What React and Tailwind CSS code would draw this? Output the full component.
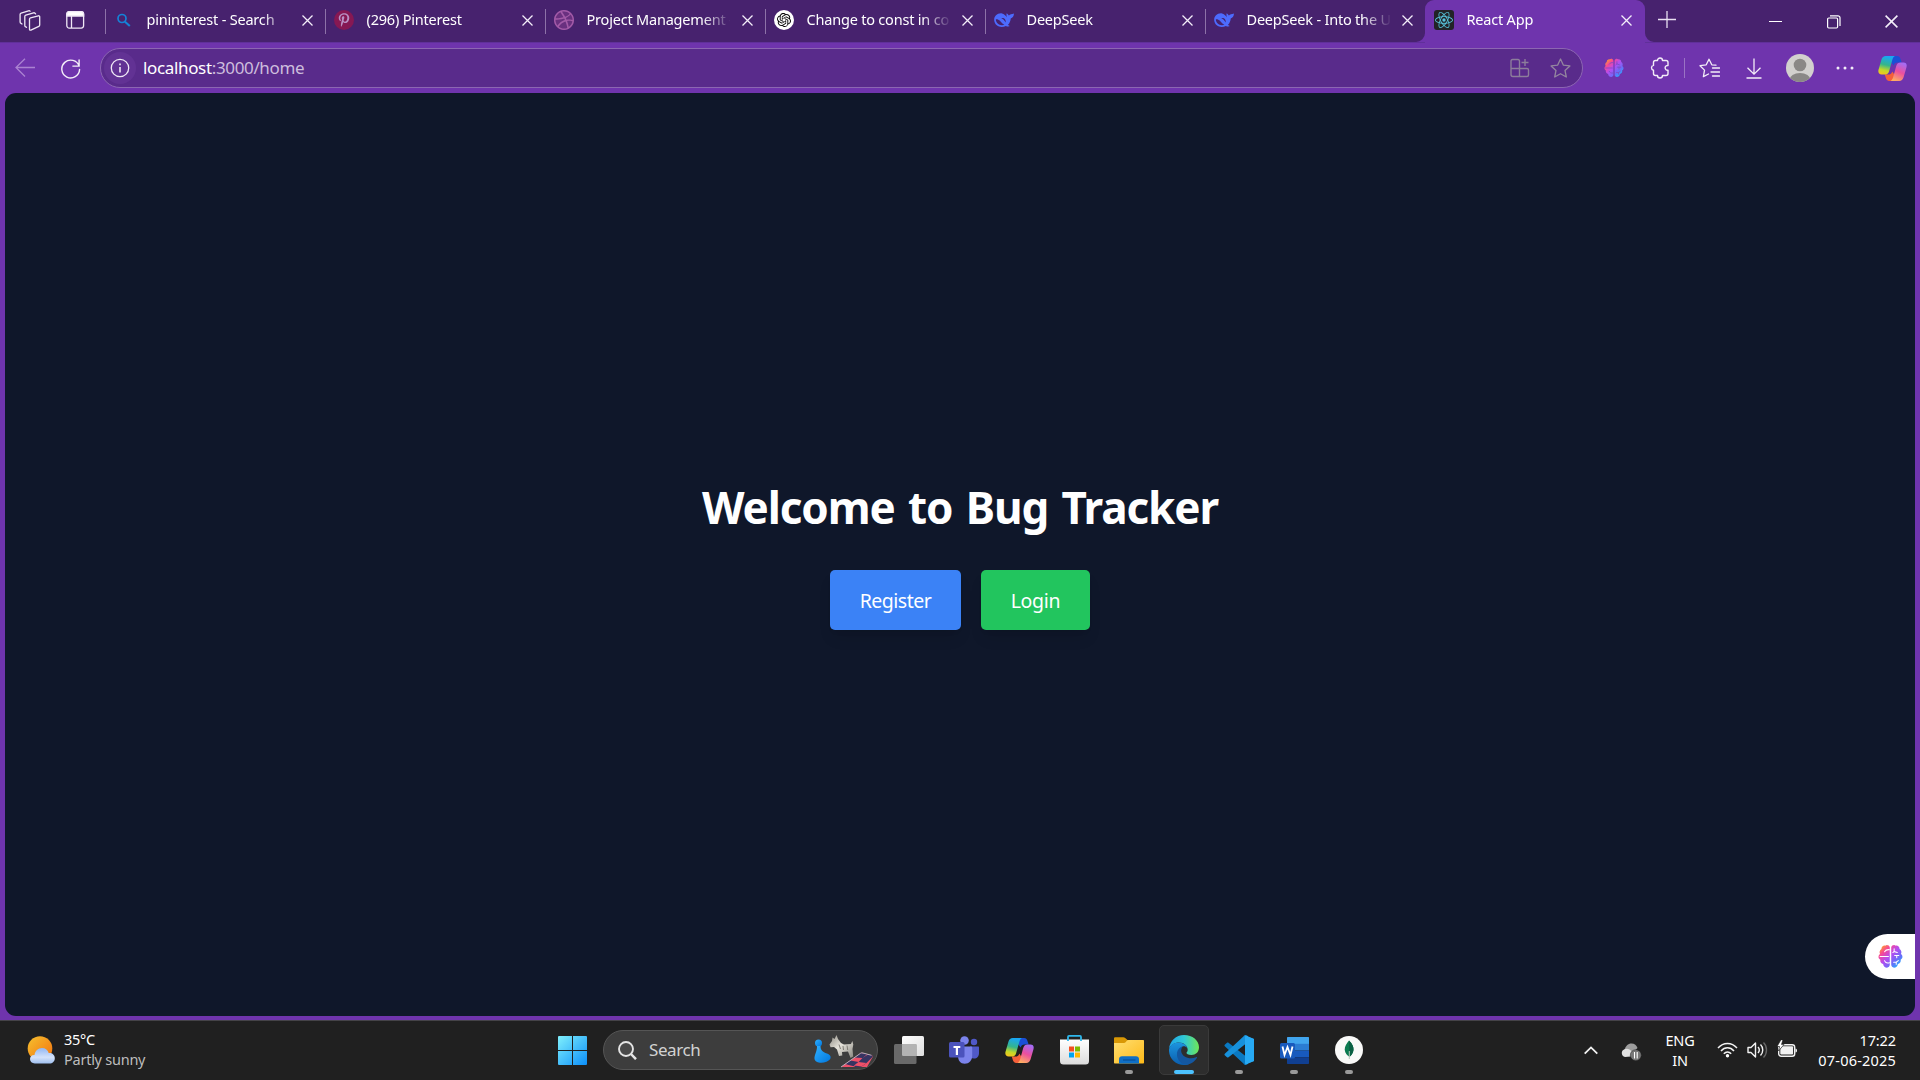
import React from "react";
import { FaPinterestP } from "react-icons/fa";
import { SiOpenai, SiDribbble, SiReact } from "react-icons/si";

const Cross = ({ s = 11 }) => (
  <svg width={s} height={s} viewBox="0 0 11 11" fill="none" stroke="#f4effa" strokeWidth="1.3">
    <path d="M.5.5l10 10M10.5.5l-10 10" />
  </svg>
);

const Whale = () => (
  <svg width="20" height="20" viewBox="0 0 20 20">
    <path
      fill="#4d6bfe"
      d="M8 3.400c2 .5 3.700 2 4.900 3.800-.5-1.300-.6-2.700-.2-4 .9.500 1.500 1.200 2.200 2.200C15.900 4.200 17.800 4.400 20 3.600c-.1 2.700-1.300 4.300-3.300 4.900-.1 2.300-1 4.600-2.700 6.300.4.600 1 .9 1.900 1.300-1.200.7-2.700.6-4-.2C7.500 18.200 1 16.800.2 10.600-.2 6.500 3 2.800 8 3.400z"
    />
    <path d="M1.800 9.600c.3 3.200 2.800 5.600 6.200 5.600.9 0 1.700-.2 2.400-.5C8 13.800 6.600 10.300 3.800 9.400c-.8-.2-1.500-.1-2 .2z" fill="#47226e" />
    <path d="M7.300 8.300c1.500-.6 3.300 0 4.100 1.700.4.900.4 1.700.2 2.400-.9-1.500-2.100-3.200-4.300-4.100z" fill="#47226e" />
    <path d="M6.300 4.500c1.600.5 3.100 1.500 4.200 3" stroke="#4d6bfe" strokeWidth=".6" fill="none" />
  </svg>
);

const Brain = ({ s, id, line }) => (
  <svg width={s} height={s} viewBox="0 0 24 24">
    <defs>
      <linearGradient id={id} gradientUnits="userSpaceOnUse" x1="3" y1="2" x2="21" y2="21">
        <stop offset="0" stopColor="#ffa126" />
        <stop offset=".22" stopColor="#f74796" />
        <stop offset=".48" stopColor="#b44df0" />
        <stop offset=".75" stopColor="#6b6cf8" />
        <stop offset="1" stopColor="#1fb6ff" />
      </linearGradient>
    </defs>
    <path
      fill={`url(#${id})`}
      d="M11.300 3.200C10.800 1 8.400.4 6.900 1.600 5 1.300 3.300 2.700 3.300 4.700 1.600 5.700 1 8 2 9.600c-2 1.400-2 4.300.2 5.400-.4 2 .9 3.800 2.700 4.100.2 2.100 1.900 3.600 3.700 3.600 1.500 0 2.700-1.200 2.700-2.700zM12.700 3.200C13.200 1 15.600.4 17.100 1.600 19 1.300 20.700 2.700 20.700 4.700c1.700 1 2.300 3.300 1.300 4.900 2 1.400 2 4.300-.2 5.400.4 2-.9 3.800-2.700 4.100-.2 2.100-1.900 3.600-3.700 3.600-1.500 0-2.700-1.200-2.700-2.700z"
    />
    <path
      fill="none"
      stroke={line}
      strokeWidth="1"
      strokeLinecap="round"
      d="M11 5.500C9 5.200 7.300 5.800 6.300 7.400M2 12h8M11 18c-2.400.7-4.200-.5-4.800-2M15.500 4.500v2.700l3 1M15.500 7.200l-1.300 1M16 11h4M18 11v2.200M15 17.500h2.500l2-1.500M17.500 17.500v2"
    />
  </svg>
);

const Copilot = ({ s, id }) => (
  <svg width={s} height={s} viewBox="0 0 28 28">
    <defs>
      <linearGradient id={id + "a"} x1=".4" y1="0" x2=".2" y2="1">
        <stop offset="0" stopColor="#19a7f2" />
        <stop offset=".45" stopColor="#35b58c" />
        <stop offset=".75" stopColor="#c6d827" />
        <stop offset="1" stopColor="#f8c21c" />
      </linearGradient>
      <linearGradient id={id + "b"} x1=".7" y1="0" x2=".3" y2="1">
        <stop offset="0" stopColor="#a46cf5" />
        <stop offset=".5" stopColor="#ec4f9e" />
        <stop offset="1" stopColor="#ffae62" />
      </linearGradient>
    </defs>
    <path d="M8 2h10.500c2 0 2.800 1.300 3.300 3l1 3.200h-4c-2 0-3.200 1-3.700 3z" fill="#1a4fd6" />
    <path d="M20 26H11c-2 0-3-1-3.500-3l-1-3.200h3.500c2 0 3.300-1 3.800-3z" fill="#f5603a" />
    <path d="M7.500 2h8.800c-1.400.8-2 2-2.500 3.800l-3 10.500c-.7 2.500-2 3.500-4.500 3.500H3.500C1 19.800-.2 18 .5 15.300L3.300 5.500C4 3.200 5.400 2 7.500 2z" fill={`url(#${id}a)`} />
    <path d="M20.500 26h-8.300c1.300-.8 2-2 2.500-3.800l2.900-10.500c.7-2.500 2-3.500 4.400-3.500h2.600c2.500 0 3.600 1.800 2.900 4.500l-2.800 9.800c-.7 2.300-2.100 3.500-4.200 3.500z" fill={`url(#${id}b)`} />
  </svg>
);

const tabs = [
  {
    title: "pininterest - Search",
    icon: (
      <svg width="20" height="20" viewBox="0 0 20 20" fill="none" stroke="#1583d8">
        <circle cx="8" cy="8.500" r="4" strokeWidth="1.700" />
        <path d="M11 11.700l4.800 4.400" strokeWidth="2.100" />
      </svg>
    ),
  },
  {
    title: "(296) Pinterest",
    icon: (
      <span className="flex size-5 items-center justify-center rounded-full bg-[#861853] text-[#b990c4]">
        <FaPinterestP size={14} />
      </span>
    ),
  },
  {
    title: "Project Management -",
    icon: (
      <span className="flex size-5 items-center justify-center rounded-full bg-[#69307f] text-[#a35ba8]">
        <SiDribbble size={20} />
      </span>
    ),
  },
  {
    title: "Change to const in co",
    icon: (
      <span className="flex size-5 items-center justify-center rounded-full bg-white text-black">
        <SiOpenai size={14} />
      </span>
    ),
  },
  { title: "DeepSeek", icon: <Whale /> },
  { title: "DeepSeek - Into the U", icon: <Whale /> },
  {
    title: "React App",
    active: true,
    icon: (
      <span className="flex size-5 items-center justify-center rounded-[3px] bg-[#222326] text-[#58c4dc]">
        <SiReact size={18} />
      </span>
    ),
  },
];

function Tab({ title, icon, active }) {
  return (
    <div
      className={
        active
          ? "relative flex h-[43px] w-[220px] rounded-t-[9px] bg-[#6f34ad] pl-[9px]"
          : "relative flex h-[42px] w-[220px] pl-[9px]"
      }
    >
      {active ? (
        <>
          <svg className="absolute top-[33px] -left-[9px]" width="9" height="9"><path d="M9 0v9H0a9 9 0 0 0 9-9z" fill="#6f34ad" /></svg>
          <svg className="absolute top-[33px] -right-[9px]" width="9" height="9"><path d="M0 0v9h9a9 9 0 0 1-9-9z" fill="#6f34ad" /></svg>
        </>
      ) : (
        <span className="absolute top-[9px] left-0 h-[25px] w-px bg-[#8d72a8]" />
      )}
      <span className="mt-[10px] size-5 shrink-0">{icon}</span>
      <span className="mt-[8px] ml-[12.5px] h-[22px] w-[143px] overflow-hidden text-[14.5px] leading-[22px] tracking-[-0.2px] whitespace-nowrap text-white [mask-image:linear-gradient(to_right,black_115px,transparent_145px)]">
        {title}
      </span>
      <span className={active ? "mt-[15px] ml-[11px]" : "mt-[15px] ml-[12px]"}><Cross /></span>
    </div>
  );
}

const Cell = ({ w, children }) => <span className={"flex h-10 items-center justify-center " + w}>{children}</span>;

function TabStrip() {
  return (
    <div className="flex h-[42px] w-full bg-[#47226e]">
      <div className="flex w-[105px] items-start pt-[10px] pl-[19px]">
        <svg width="22" height="21" viewBox="0 0 22 21" fill="none" stroke="#efe8f5" strokeWidth="1.300" strokeLinejoin="round" strokeLinecap="round">
          <path d="M10.500 9.200c0-.7.3-1.200 1-1.400l7.800-2c.8-.2 1.400.2 1.400 1v8.300c0 .6-.3 1.100-.9 1.300l-7.900 3.700c-.8.300-1.400 0-1.400-.8z" />
          <path d="M7.500 17.300l-.8-.5c-.6-.3-.9-.8-.9-1.400V6.600c0-.7.400-1.200 1-1.400l7.700-2.400c.6-.2 1.100 0 1.500.4l.6.700" />
          <path d="M3 14l-.9-.6c-.6-.3-1-.8-1-1.500V4.600c0-.7.400-1.200 1-1.400L9.500.8c.6-.2 1.200 0 1.500.4" />
        </svg>
        <svg className="ml-[25px]" width="19" height="19" viewBox="0 0 19 19" fill="none" stroke="#efe8f5" strokeWidth="1.300">
          <rect x=".8" y="1.700" width="16.800" height="16.400" rx="2.500" />
          <path d="M.8 6V4A2.500 2.500 0 0 1 3.300 1.700h11.800A2.500 2.500 0 0 1 17.600 4v2z" fill="#fff" />
          <path d="M5.500 6v12" />
        </svg>
      </div>
      {tabs.map((t) => <Tab key={t.title} {...t} />)}
      <svg className="mt-[11px] ml-[13px]" width="18" height="18" viewBox="0 0 18 18" stroke="#e9e0f2" strokeWidth="1.300"><path d="M0 8.500h18M9 0v17" /></svg>
      <div className="ml-auto flex items-center pr-[22px]">
        <span className="h-px w-[13px] bg-white" />
        <svg className="mt-[1px] ml-[45px]" width="14" height="14" viewBox="0 0 14 14" fill="none" stroke="#fff" strokeWidth="1.200">
          <rect x=".6" y="3" width="10" height="10" rx="1.200" />
          <path d="M3 .8h8A2 2 0 0 1 13 2.800V11" />
        </svg>
        <span className="ml-[44px]"><Cross s={13} /></span>
      </div>
    </div>
  );
}

function Toolbar() {
  return (
    <div className="flex h-[51px] items-start border-t border-[#60309a] bg-[#6f34ad] pt-[5px]">
      <Cell w="w-[50px]">
        <svg width="20" height="20" viewBox="0 0 20 20" fill="none" stroke="#aa82d1" strokeWidth="1.300"><path d="M20 9.500H1M10 .7L1 9.500l9 9" /></svg>
      </Cell>
      <Cell w="w-[40px]">
        <svg width="21" height="21" viewBox="0 0 22 22" fill="none" stroke="#f3edf8" strokeWidth="1.500" strokeLinecap="round"><path d="M20 8.500A9.300 9.300 0 1 0 20.500 12M20 2v6.500h-6.500" /></svg>
      </Cell>
      <div className="ml-[10px] flex h-10 w-[1483px] items-center rounded-full border border-[#8c66b2] bg-[#592b8b] pl-[3px]">
        <span className="flex size-8 items-center justify-center rounded-full bg-[#623294]">
          <svg width="20" height="20" viewBox="0 0 20 20" fill="none" stroke="#efe8f5" strokeWidth="1.300"><circle cx="10" cy="10" r="8.700" /><path d="M10 9v5.500M10 5.500v1.800" strokeWidth="1.600" /></svg>
        </span>
        <span className="ml-[7px] text-[17px] tracking-[-0.35px] text-[#cdbddd]"><span className="text-white">localhost</span>:3000/home</span>
        <svg className="ml-auto" width="20" height="20" viewBox="0 0 20 20" fill="none" stroke="#8c7d9b" strokeWidth="1.400" strokeLinejoin="round">
          <path d="M9.500 18.500V3c0-1-.5-1.500-1.500-1.500H2.500C1.500 1.500 1 2 1 3v13.500c0 1.200.8 2 2 2h14c1 0 1.500-.5 1.500-1.500v-5c0-1-.5-1.500-1.500-1.500H1M15 1v7M11.500 4.500h7" />
        </svg>
        <svg className="mr-[11px] ml-[20px]" width="21" height="21" viewBox="0 0 21 21" fill="none" stroke="#94869f" strokeWidth="1.300" strokeLinejoin="round">
          <path d="M10.500 1l2.800 6.100 6.600.8-4.900 4.500 1.300 6.600-5.800-3.300L4.700 19 6 12.400 1.100 7.900l6.600-.8z" />
        </svg>
      </div>
      <span className="ml-[7px] flex">
        <Cell w="w-[48px]"><Brain s={20} id="brainA" line="#7d4bc4" /></Cell>
        <Cell w="w-[44px]">
          <svg width="20" height="22" viewBox="0 0 20 22" fill="none" stroke="#f3edf8" strokeWidth="1.400" strokeLinejoin="round">
            <path d="M7.500 3.500a2.500 2.500 0 0 1 5 0h3.500c1.200 0 2 .8 2 2v3a2.400 2.400 0 1 0 0 4.700v3.300c0 1.200-.8 2-2 2h-3.500a2.500 2.500 0 0 1-5 0H5.500c-1.200 0-2-.8-2-2v-3.200a2.500 2.500 0 0 1 0-4.900V5.500c0-1.200.8-2 2-2z" />
          </svg>
        </Cell>
        <Cell w="w-[4px]"><span className="h-5 w-px bg-[#9a73c4]" /></Cell>
        <Cell w="w-[46px]">
          <svg width="21" height="21" viewBox="0 0 21 21" fill="none" stroke="#f3edf8" strokeWidth="1.300" strokeLinejoin="round" strokeLinecap="round">
            <path d="M17 7.200l-4.200-.4L10 1.200 7.200 6.800l-6.200.9 4.500 4.400-1.100 6.500L9.500 16M13.500 10h7M12 14h8.500M13.500 18h7" />
          </svg>
        </Cell>
        <Cell w="w-[44px]">
          <svg width="16" height="21" viewBox="0 0 16 21" fill="none" stroke="#f3edf8" strokeWidth="1.300"><path d="M8 .5v15.500M1.500 9.700L8 16.200l6.500-6.500M.5 20h15" /></svg>
        </Cell>
        <Cell w="w-[47px]">
          <svg width="28" height="28" viewBox="0 0 28 28"><clipPath id="av"><circle cx="14" cy="14" r="14" /></clipPath><g clipPath="url(#av)"><path fill="#d2d0ce" d="M0 0h28v28H0z" /><circle cx="14" cy="11" r="6.300" fill="#8a8886" /><ellipse cx="14" cy="26" rx="10.500" ry="7" fill="#8a8886" /></g></svg>
        </Cell>
        <Cell w="w-[44px]">
          <svg width="18" height="4" viewBox="0 0 18 4" fill="#f3edf8"><circle cx="2" cy="2" r="1.500" /><circle cx="9" cy="2" r="1.500" /><circle cx="16" cy="2" r="1.500" /></svg>
        </Cell>
        <Cell w="w-[51px]"><Copilot s={29} id="copA" /></Cell>
      </span>
    </div>
  );
}

function Page() {
  return (
    <main className="flex h-[927px] bg-[#6f34ad] px-[5px] pb-[4px]">
      <div className="relative flex w-full flex-col items-center overflow-hidden rounded-[11px] bg-[#0f172a]">
        <h1 className="mt-[384px] h-[60px] text-[44px] leading-[60px] font-bold tracking-[-1.1px] whitespace-nowrap text-white [word-spacing:3px]">Welcome to Bug Tracker</h1>
        <div className="mt-[33px] flex gap-5">
          <button className="h-[60px] w-[131px] rounded-[5px] bg-[#3b82f6] pt-px text-[19.5px] tracking-[-0.5px] text-white shadow-lg">Register</button>
          <button className="h-[60px] w-[109px] rounded-[5px] bg-[#22c55e] pt-px text-[19.5px] tracking-[-0.3px] text-white shadow-lg">Login</button>
        </div>
        <div className="absolute top-[841px] right-0 flex h-[45px] w-[50px] items-center rounded-l-full bg-white pl-[13px]">
          <Brain s={25} id="brainB" line="#ffffff" />
        </div>
      </div>
    </main>
  );
}

const WindowsLogo = () => (
  <svg width="29" height="29" viewBox="0 0 29 29">
    <defs><linearGradient id="win" gradientUnits="userSpaceOnUse" x1="0" y1="0" x2="29" y2="29"><stop offset="0" stopColor="#80f0fc" /><stop offset="1" stopColor="#0c8ffa" /></linearGradient></defs>
    <path d="M1 0h13v14H0V1a1 1 0 0 1 1-1zM15 0h13a1 1 0 0 1 1 1v13H15zM0 15h14v14H1a1 1 0 0 1-1-1zM15 15h14v13a1 1 0 0 1-1 1H15z" fill="url(#win)" />
  </svg>
);

const SearchArt = () => (
  <svg width="62" height="38" viewBox="0 0 62 38">
    <defs>
      <linearGradient id="pawn" x1="0" y1="0" x2="1" y2="1"><stop offset="0" stopColor="#2fb0ff" /><stop offset="1" stopColor="#0077df" /></linearGradient>
      <linearGradient id="dog" x1="0" y1="0" x2="1" y2="1"><stop offset="0" stopColor="#8c8981" /><stop offset=".45" stopColor="#e6e3db" /><stop offset="1" stopColor="#898780" /></linearGradient>
      <clipPath id="board"><path d="M29 36L48.500 22.300c.8-.5 1.600-.6 2.500-.3l8.500 2.300c1.300.4 1.600 1 .9 2.200L55 36z" /></clipPath>
    </defs>
    <circle cx="6.500" cy="12" r="3.500" fill="url(#pawn)" />
    <path d="M5 15h3.500c0 4 2 6 6.500 7.500 5 1.800 5 6-.5 8.300-5 2-11.500 1-12-3C2.200 24 5.200 20.500 5 15z" fill="url(#pawn)" />
    <path d="M17.500 13.500L20 10l.5-3.500L22.500 8l2-4 1.500 4 3 4 3 1.500 7-.5 1.300-3 1 3.500-.8 4.500.7 7.500-2.600 1.500L36 20.500l-6 .5.300 3.500-3.300.5-2-6.500-3-2.500-3.500.2z" fill="url(#dog)" />
    <path d="M27 13.500l1.500 4.500M31 15l.5 4M35 14.500l.7 4.500" stroke="#77746d" strokeWidth=".9" />
    <g clipPath="url(#board)">
      <path fill="#ef5068" d="M28 20h34v18H28z" />
      <path fill="#363462" d="M42.500 26.500l6-4.500 7 1-5 4zM50.500 27l8 1-4 4-8-1zM33 33l5.500-3.500 8 1.500-5 4.200zM46.500 31L42 36h7l5.500-4zM56 23.500l6 1-3.500 3.500-8-1z" />
      <path fill="#ef5068" d="M46.500 31l-4 3.500 7 1 5-3.500z" />
    </g>
    <path d="M29 36L48.500 22.300c.8-.5 1.600-.6 2.500-.3l8.500 2.300" fill="none" stroke="#b5aeb9" strokeWidth="1" />
  </svg>
);

const apps = [
  ["Task view", null,
    <svg width="30" height="28" viewBox="0 0 30 28"><defs><linearGradient id="tv" x1="0" y1="0" x2="1" y2="1"><stop offset="0" stopColor="#fff" /><stop offset="1" stopColor="#dedede" /></linearGradient></defs><rect x="8" width="22" height="20" rx="1.500" fill="url(#tv)" /><rect y="8" width="22.500" height="20" rx="1.500" fill="#777" opacity=".85" /><path d="M8 8h14.500v12H9.500A1.500 1.500 0 0 1 8 18.500z" fill="#b3b3b3" /></svg>],
  ["Teams", null,
    <svg width="30" height="28" viewBox="0 0 30 28"><circle cx="25" cy="6" r="3.200" fill="#5059c9" /><circle cx="15.500" cy="4.500" r="4.300" fill="#7b83eb" /><path d="M21 10.500h8c.7 0 1 .4 1 1V17c0 3.500-2 5.500-5 5.500s-4-2-4-4z" fill="#5059c9" /><path d="M9 10.500h13c.8 0 1.200.5 1.200 1.200v8c0 4.500-3.200 8-7.500 8S9 24.500 9 20z" fill="#7b83eb" /><rect y="6" width="15.500" height="15.500" rx="1.500" fill="#4b53bc" /><path d="M4.500 10h6.800v2H9v7H6.800v-7H4.500z" fill="#fff" /></svg>],
  ["Copilot", null, <Copilot s={29} id="copB" />],
  ["Store", null,
    <svg width="29" height="30" viewBox="0 0 29 30"><defs><linearGradient id="st" x1="0" y1="0" x2="0" y2="1"><stop offset="0" stopColor="#fff" /><stop offset="1" stopColor="#dcdcdc" /></linearGradient></defs><path d="M0 4.500h29V26a3.500 3.500 0 0 1-3.500 3.500h-22A3.500 3.500 0 0 1 0 26z" fill="url(#st)" /><path d="M8 6V1.900c0-.6.3-1 1-1h11c.7 0 1 .4 1 1V6" fill="none" stroke="#2fb8ec" strokeWidth="1.800" /><path d="M9 11.500h5v5H9z" fill="#f25022" /><path d="M15 11.500h5v5h-5z" fill="#7fba00" /><path d="M9 17.500h5v5H9z" fill="#00a4ef" /><path d="M15 17.500h5v5h-5z" fill="#ffb900" /></svg>],
  ["Files", "idle",
    <svg width="30" height="27" viewBox="0 0 30 27"><defs><linearGradient id="fo" x1="0" y1="0" x2="1" y2="1"><stop offset="0" stopColor="#ffdf72" /><stop offset="1" stopColor="#fdb918" /></linearGradient></defs><path d="M0 1.500C0 .7.600.2 1.300.2h8c.8 0 1.300.2 1.900.8L13.500 3H28v8H0z" fill="#d99805" /><path d="M0 6h9.500c1 0 1.600-.3 2.300-1l1-1.200c.4-.5.900-.8 1.700-.8H29c.6 0 1 .4 1 1v21.500c0 .6-.4 1-1 1H1c-.6 0-1-.4-1-1z" fill="url(#fo)" /><path d="M5 26.500v-4.300C5 20.400 6.200 19.300 8 19.300h14c1.800 0 3 1.100 3 2.900v4.300z" fill="#0f6fc6" /><path d="M9 23h12.500" stroke="#08519b" strokeWidth="1.300" /></svg>],
  ["Edge", "open",
    <svg width="30" height="30" viewBox="0 0 30 30"><defs>
      <linearGradient id="e1" x1="0" y1=".5" x2="1" y2=".5"><stop offset="0" stopColor="#1fa5ea" /><stop offset=".5" stopColor="#2fc7d5" /><stop offset="1" stopColor="#6fe656" /></linearGradient>
      <linearGradient id="e2" x1="0" y1="0" x2="0" y2="1"><stop offset="0" stopColor="#1c95df" /><stop offset="1" stopColor="#0b5dad" /></linearGradient></defs>
      <path d="M0 14C.8 6 7 0 15 0c8.500 0 15 5.500 15 12.300 0 5-3.500 7.700-7.500 7.700-3.500 0-5.200-1.200-5-2.200.2-.6 1.200-1 1.200-3C18.700 11 15 7.500 10 7.500 5.500 7.500 1.500 10 0 14z" fill="url(#e1)" />
      <path d="M0 14.500C.8 10 5 7.500 9.800 7.500c4.200 0 7.500 2.400 8.500 5.300-1.200-1.300-2.700-1.800-4-1.600-2.600.5-4 3.300-4 6 0 6 5 11.800 11 11.300-2 1-4 1.500-6.300 1.500C6.500 30-.5 23 0 14.500z" fill="url(#e2)" />
      <path d="M12 12c-3 1.800-4.500 4.700-4 8.500.7 5.500 5 9 9 9.300 4.500-.3 8.500-2.800 11-7 .3-.7-.3-1-1-.6-6 2.700-13.600 0-14.700-5.200-.4-2 .1-3.700 1.400-5.500-.6 0-1.200.2-1.700.5z" fill="#1457a0" />
    </svg>],
  ["Code", "idle",
    <svg width="30" height="30" viewBox="0 0 30 30"><path d="M1 9.500l2-1.800c.4-.4 1-.4 1.500 0L24 23v6L21 30 .8 11.200c-.5-.5-.5-1.100.2-1.700z" fill="#0a79c2" /><path d="M1 20.500l2 1.800c.4.4 1 .4 1.500 0L24 7V1l-3-1L.8 18.800c-.5.5-.5 1.100.2 1.700z" fill="#1791dc" /><path d="M21.500 29.700L30 26V4L21.500.3c-.7-.3-1.300-.2-1.800.4.900-.9 2.300-.2 2.300 1v26.600c0 1.200-1.400 1.900-2.300 1 .5.6 1.100.7 1.800.4z" fill="#27aaf4" /><path d="M21 1l9 3v22l-9 3z" fill="#27aaf4" /></svg>],
  ["Word", "idle",
    <svg width="29" height="27" viewBox="0 0 29 27"><path d="M7 1c0-.6.4-1 1-1h20c.6 0 1 .4 1 1v6H7z" fill="#41a5ee" /><path d="M7 6.800h22v6.700H7z" fill="#2b7cd3" /><path d="M7 13.500h22v6.700H7z" fill="#185abd" /><path d="M7 20.200h22V26c0 .6-.4 1-1 1H8c-.6 0-1-.4-1-1z" fill="#103f91" /><rect y="6" width="15" height="15.500" rx="1.500" fill="#185abd" /><path d="M2.500 9.500l2 8.500 3-8 3 8 2-8.500" fill="none" stroke="#fff" strokeWidth="1.800" /></svg>],
  ["Compass", "idle",
    <svg width="28" height="28" viewBox="0 0 28 28"><circle cx="14" cy="14" r="14" fill="#f9f9f8" /><path d="M14 4.500c3.600 3.500 4.700 6.500 4.500 9.500-.3 3.500-2.500 5.500-4 6.700-2-1-4.500-3.500-4.800-7 0-3.500 1.800-6 4.300-9.200z" fill="#0b7a50" /><path d="M14 4.500c3.600 3.500 4.700 6.500 4.500 9.500-.3 3.500-2.500 5.500-4 6.700z" fill="#0a5f43" /><path d="M14.300 15v8" stroke="#b7c6bb" strokeWidth="1" /></svg>],
];

function Taskbar() {
  return (
    <footer className="flex h-[60px] items-start border-t border-[#454348] bg-[#202020] text-[14.5px] text-white">
      <div className="flex w-[558px] pt-[8px] pl-[27px]">
        <svg className="mt-[7px]" width="28" height="28" viewBox="0 0 28 28">
          <defs><linearGradient id="sun" x1="0" y1="0" x2="1" y2="1"><stop offset="0" stopColor="#f5c12f" /><stop offset="1" stopColor="#f3700d" /></linearGradient><linearGradient id="cl" x1="0" y1="0" x2="0" y2="1"><stop offset="0" stopColor="#91b7f3" /><stop offset=".6" stopColor="#d4e2fa" /><stop offset="1" stopColor="#9fbfef" /></linearGradient></defs>
          <circle cx="13" cy="12.500" r="12.300" fill="url(#sun)" />
          <path d="M7.500 19c.5-4 3.500-7 7.500-7 3.500 0 6 2 6.700 5 3.300-.4 6.100 1.700 6.100 5.200 0 3.200-2.300 5.300-5.300 5.300H7.800C5 27.500 3 25.700 3 23.100 3 20.500 5 18.700 7.500 19z" fill="url(#cl)" />
        </svg>
        <div className="ml-[9px] leading-5 tracking-[-0.25px]"><div>35°C</div><div className="text-[#bdbdbd]">Partly sunny</div></div>
      </div>
      <span className="mt-[15px]"><WindowsLogo /></span>
      <div className="mt-[9px] ml-[16px] flex h-10 w-[275px] items-center rounded-full border border-[#555] bg-[#3d3d3d] pl-[14px]">
        <svg width="19" height="19" viewBox="0 0 19 19" fill="none" stroke="#e5e5e5" strokeWidth="1.900"><circle cx="8" cy="8" r="7" fill="#4a4a4a" /><path d="M13 13l5 5.200" strokeWidth="2.500" /></svg>
        <span className="ml-[12px] text-[17px] tracking-[-0.4px] text-[#d2d2d2]">Search</span>
        <span className="ml-auto pr-[3px]"><SearchArt /></span>
      </div>
      <div className="mt-[4px] ml-[6px] flex gap-[5px]">
        {apps.map(([name, state, icon]) => (
          <div key={name} aria-label={name} className={state === "open" ? "relative flex size-[50px] items-center justify-center rounded-[5px] border border-[#3a3a3a] bg-[#2d2d2d]" : "relative flex size-[50px] items-center justify-center"}>
            {icon}
            {state && <span className={state === "open" ? "absolute bottom-0 h-[4px] w-5 rounded-full bg-[#4cc2ff]" : "absolute bottom-[1px] h-[4px] w-2 rounded-full bg-[#9a9a9a]"} />}
          </div>
        ))}
      </div>
      <div className="ml-auto flex h-[58px] items-center pr-[24px] leading-5">
        <svg width="14" height="9" viewBox="0 0 14 9" fill="none" stroke="#f2f2f2" strokeWidth="1.800"><path d="M.7 7.700L7 1.400l6.300 6.300" /></svg>
        <svg className="mt-[3px] ml-[23px]" width="21" height="18" viewBox="0 0 21 18"><path d="M3.500 7C4.500 3 7 .5 10.500.5c3 0 5.200 2 6 4.500l-6 6z" fill="#9d9d9d" /><path d="M4 14a4 4 0 0 1-.5-7.700C6 5 9 6 10.500 8.500L15 13z" fill="#e1e1e1" /><circle cx="14.800" cy="12.200" r="5.500" fill="#777" stroke="#202020" strokeWidth=".5" /><path d="M13.500 9v6.500M16.200 9v6.500" stroke="#fff" strokeWidth="1.100" /></svg>
        <div className="mb-px ml-[21px] w-[34px] text-center tracking-[-0.2px]"><div>ENG</div><div>IN</div></div>
        <svg className="ml-[20px]" width="21" height="16" viewBox="0 0 21 16" fill="none" stroke="#f2f2f2" strokeWidth="1.500"><path d="M1 6c5.300-6 13.700-6 19 0M4 9c3.700-4.200 9.300-4.200 13 0M6.800 11.800c2.200-2.500 5.200-2.500 7.400 0" /><circle cx="10.500" cy="13.700" r="1.700" fill="#fff" stroke="none" /></svg>
        <svg className="ml-[9px]" width="21" height="18" viewBox="0 0 21 18" fill="none" stroke="#f2f2f2" strokeWidth="1.400" strokeLinejoin="round"><path d="M1 6.500h3L8.500 2v14L4 11.500H1z" /><path d="M11 6c1.500 1.700 1.500 4.300 0 6M13.500 3.500c3 3 3 8 0 11" /><path d="M16.500 1.500c4 4 4 11 0 15" stroke="#666" /></svg>
        <svg className="mb-[3px] ml-[9px]" width="21" height="18" viewBox="0 0 21 18"><rect x="1.700" y="4.700" width="16" height="11.500" rx="2.500" fill="none" stroke="#f2f2f2" strokeWidth="1.400" /><rect x="3.300" y="6.300" width="12.800" height="8.300" rx="1" fill="#f2f2f2" /><path d="M18.500 8.500c2 0 2 4 0 4z" fill="#f2f2f2" /><path d="M4-.3L0 6.500h2.500L1.500 11 7 4.500H4.500L6-.3z" fill="#fff" stroke="#202020" strokeWidth=".7" /></svg>
        <div className="mb-px ml-[19px] w-[79px] text-right tracking-[0.2px] whitespace-nowrap"><div className="tracking-[-0.1px]">17:22</div><div>07-06-2025</div></div>
      </div>
    </footer>
  );
}

export default function App() {
  return (
    <div className="flex h-[1080px] w-[1920px] flex-col overflow-hidden font-['Noto_Sans','Open_Sans',sans-serif]">
      <TabStrip />
      <Toolbar />
      <Page />
      <Taskbar />
    </div>
  );
}
